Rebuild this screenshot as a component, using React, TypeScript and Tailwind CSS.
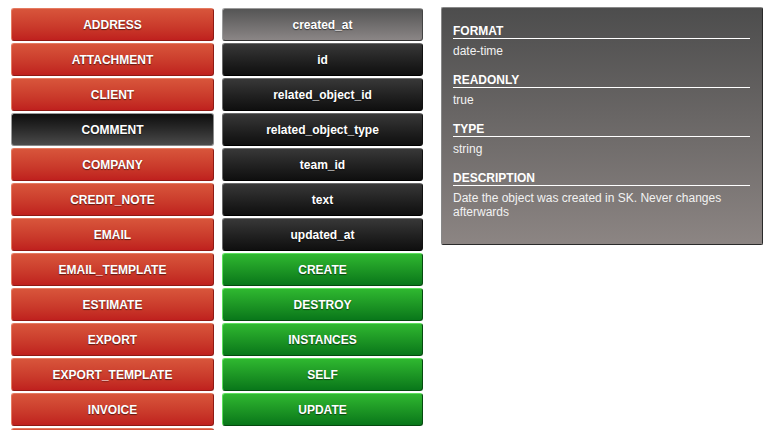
const resources = [
  'ADDRESS',
  'ATTACHMENT',
  'CLIENT',
  'COMMENT',
  'COMPANY',
  'CREDIT_NOTE',
  'EMAIL',
  'EMAIL_TEMPLATE',
  'ESTIMATE',
  'EXPORT',
  'EXPORT_TEMPLATE',
  'INVOICE',
  'INVOICE_ITEM',
  'LINE_ITEM',
];

const properties = ['created_at', 'id', 'related_object_id', 'related_object_type', 'team_id', 'text', 'updated_at'];
const actions = ['CREATE', 'DESTROY', 'INSTANCES', 'SELF', 'UPDATE'];

const details = [
  { label: 'FORMAT', value: 'date-time' },
  { label: 'READONLY', value: 'true' },
  { label: 'TYPE', value: 'string' },
  { label: 'DESCRIPTION', value: 'Date the object was created in SK. Never changes afterwards' },
];

const base =
  'h-[33px] flex items-center justify-center rounded-[3px] border text-[12px] font-bold text-white [text-shadow:0_1px_1px_rgba(0,0,0,0.55)] cursor-pointer';

const red =
  'bg-gradient-to-b from-[#d8553b] to-[#bf201e] border-t-[#e47a60] border-l-[#e47a60] border-r-[#8f1a14] border-b-[#8f1a14]';
const dark =
  'bg-gradient-to-b from-[#383838] to-[#0f0f0f] border-t-[#6a6a6a] border-l-[#6a6a6a] border-r-[#111] border-b-[#000]';
const darkActive =
  'bg-gradient-to-b from-[#0e0e0e] to-[#4b4b4b] border-t-[#9a9a9a] border-l-[#9a9a9a] border-r-[#8a8a8a] border-b-[#8a8a8a]';
const grayActive =
  'bg-gradient-to-b from-[#555555] to-[#8b8686] border-t-[#9a9a9a] border-l-[#9a9a9a] border-r-[#444] border-b-[#333]';
const green =
  'bg-gradient-to-b from-[#2fb830] to-[#08771a] border-t-[#5be05b] border-l-[#5be05b] border-r-[#054a0f] border-b-[#054a0f]';

export default function App() {
  return (
    <div
      className="min-h-screen bg-white pt-[8px] pl-[11px] flex items-start"
      style={{ fontFamily: '"Liberation Sans", Arial, sans-serif' }}
    >
      <div className="w-[203px] flex flex-col gap-[2px]">
        {resources.map((name) => (
          <div key={name} className={`${base} ${name === 'COMMENT' ? darkActive : red}`}>
            {name}
          </div>
        ))}
      </div>

      <div className="w-[201px] ml-[8px] flex flex-col gap-[2px]">
        {properties.map((name) => (
          <div key={name} className={`${base} ${name === 'created_at' ? grayActive : dark}`}>
            {name}
          </div>
        ))}
        {actions.map((name) => (
          <div key={name} className={`${base} ${green}`}>
            {name}
          </div>
        ))}
      </div>

      <div className="w-[322px] h-[238px] ml-[18px] -mt-[1px] rounded-[2px] border border-t-[#888] border-l-[#888] border-r-[#2a2a2a] border-b-[#2a2a2a] bg-gradient-to-b from-[#4d4d4d] to-[#8c8583] pt-[16px] pl-[11px] pr-[12px] text-white text-[12px]">
        {details.map((d) => (
          <div key={d.label} className="mb-[15px]">
            <div className="font-bold leading-[14px] border-b border-white">{d.label}</div>
            <div className="mt-[5px] leading-[14px] text-[#f2f2f2]">{d.value}</div>
          </div>
        ))}
      </div>
    </div>
  );
}
